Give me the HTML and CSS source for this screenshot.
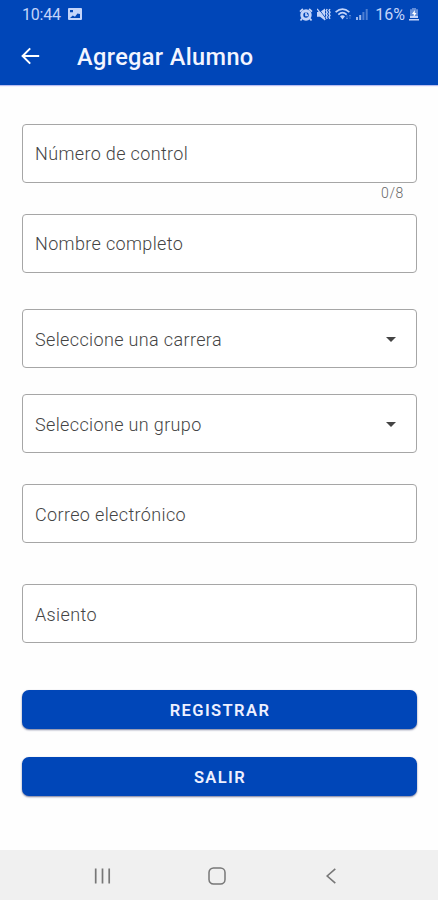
FILE: index.html
```html
<!DOCTYPE html>
<html lang="es">
<head>
<meta charset="utf-8">
<meta name="viewport" content="width=device-width, initial-scale=1">
<title>Agregar Alumno</title>
<link rel="stylesheet" href="styles.css">
</head>
<body>
<header class="header">
  <div class="status">
    <span class="time">10:44</span>
    <svg class="picture" width="14" height="13" viewBox="0 0 14 13"><path fill="currentColor" fill-rule="evenodd" d="M1 0h12a1 1 0 0 1 1 1v10a1 1 0 0 1-1 1H1a1 1 0 0 1-1-1V1a1 1 0 0 1 1-1ZM2 10h10V6L9.4 5.5 7 8.7 4.8 7.5ZM2 2v2.2h3V2Z"/></svg>
    <div class="indicators">
      <svg width="14" height="13" viewBox="0 0 14 13"><circle cx="7" cy="7" r="4.2" fill="none" stroke="currentColor" stroke-width="3"/><path d="M1 3.6 3.9 1M13 3.6 10.1 1M3 10.5l-1.5 2M11 10.5l1.5 2M7 4.5V7.3h2" fill="none" stroke="currentColor" stroke-width="1.7"/></svg>
      <svg width="14" height="13" viewBox="0 0 14 13"><path d="M0 4h3l5-3.4v12L3 8.8H0Z" fill="currentColor"/><path d="m1.2.2 7.5 10" stroke="#0046b8" stroke-width=".9"/><path d="m.2.8 8 11" stroke="currentColor" stroke-width="1.3"/><path d="m10.2 1-1 1.6 1 1.6-1 1.6 1 1.6-1 1.6 1 1.8M13 1l-1 1.6 1 1.6-1 1.6 1 1.6-1 1.6 1 1.8" fill="none" stroke="currentColor" stroke-width="1.4"/></svg>
      <svg width="17" height="13" viewBox="0 0 17 13"><path d="M.6 4.2Q7.5-1.8 14.4 4.2M3.3 6.6q4.2-3.8 8.4 0" fill="none" stroke="currentColor" stroke-width="1.7"/><path d="M5 8.2q2.5-2 5 0L7.5 11.4Z" fill="currentColor"/><path d="M12 7v4m-1.2-1.2L12 11l1.2-1.2M15 11V7m-1.2 1.2L15 7l1.2 1.2" fill="none" stroke="currentColor" stroke-width=".8" opacity=".4"/></svg>
      <svg width="13" height="13" viewBox="0 0 13 13" fill="currentColor"><path d="M0 9h2v3H0ZM3.2 7h2v5h-2Z" opacity=".8"/><path d="M6.4 4h2v8h-2ZM9.7 1h2v11h-2Z" opacity=".4"/></svg>
      <span class="percent">16%</span>
      <svg class="battery" width="10" height="13" viewBox="0 0 10 13"><path d="M3 0h4v1.2h2V8H1V1.2h2Z" fill="currentColor" opacity=".5"/><path d="M1 8h8v2H1ZM0 11h10v1.6H0Z" fill="currentColor"/><path d="M5.8 2 3 6h1.7v3L7.5 5H5.8Z" fill="#fff"/></svg>
    </div>
  </div>
  <div class="toolbar">
    <svg class="back" width="20" height="20" viewBox="0 0 20 20"><path d="M19.2 9H3M10.2 1.4 2.6 9l7.6 7.6" fill="none" stroke="#fff" stroke-width="2"/></svg>
    <h1>Agregar Alumno</h1>
  </div>
</header>
<main class="form">
  <div class="field"><span class="label">Número de control</span></div>
  <div class="counter">0/8</div>
  <div class="field"><span class="label">Nombre completo</span></div>
  <div class="field carrera"><span class="label">Seleccione una carrera</span><svg width="10" height="5" viewBox="0 0 10 5"><path d="M0 0h10L5 5Z" fill="#444"/></svg></div>
  <div class="field grupo"><span class="label">Seleccione un grupo</span><svg width="10" height="5" viewBox="0 0 10 5"><path d="M0 0h10L5 5Z" fill="#444"/></svg></div>
  <div class="field correo"><span class="label">Correo electrónico</span></div>
  <div class="field asiento"><span class="label">Asiento</span></div>
  <button class="button registrar" type="button">REGISTRAR</button>
  <button class="button salir" type="button">SALIR</button>
</main>
<nav class="nav">
  <svg width="18" height="18" viewBox="0 0 18 18"><path d="M1.7 1.5v15M8.5 1.5v15M15.2 1.5v15" stroke="#777" stroke-width="1.7"/></svg>
  <svg width="18" height="18" viewBox="0 0 18 18"><rect x="1" y="1" width="16" height="16" rx="4.5" fill="none" stroke="#777" stroke-width="1.5"/></svg>
  <svg width="18" height="18" viewBox="0 0 18 18"><path d="M13.3 1.8 5.2 9l8.1 7.2" fill="none" stroke="#777" stroke-width="1.6"/></svg>
</nav>
</body>
</html>
```
FILE: styles.css
```css
* { box-sizing: border-box; }

body {
  margin: 0;
  height: 900px;
  display: flex;
  flex-direction: column;
  background: #fefefe;
  font-family: Roboto, sans-serif;
  overflow: hidden;
}

svg { display: block; flex: none; }

.header {
  height: 85px;
  flex: none;
  background: #0046b8;
  box-shadow: 0 1px 1px #b9bdf0;
}

.status {
  height: 28px;
  display: flex;
  align-items: center;
  padding: 1px 19px 0 22px;
  color: #c3d4fa;
}

.time { font-size: 16px; line-height: 28px; letter-spacing: -0.2px; }
.picture { margin-left: 7px; }
.indicators { display: flex; align-items: center; gap: 4px; margin-left: auto; }
.percent { font-size: 16px; line-height: 28px; margin-left: 2px; }

.toolbar { height: 57px; display: flex; align-items: center; padding-left: 20px; }
.toolbar h1 {
  margin: 0 0 0 37px;
  color: #f3f5ff;
  font-size: 23.5px;
  font-weight: 500;
  line-height: 28px;
  letter-spacing: 0.38px;
}

.form { flex: 1; padding: 39px 21px 0 22px; }

.field {
  height: 59px;
  display: flex;
  align-items: center;
  justify-content: space-between;
  padding: 0 20px 0 12px;
  border: 1px solid #a6a6a6;
  border-radius: 4px;
  background: #fff;
}

.label { color: #444; font-size: 18px; font-weight: 300; line-height: 24px; letter-spacing: 0.36px; }

.counter {
  height: 31px;
  padding: 2px 13px 0 0;
  color: #666;
  font-size: 14px;
  font-weight: 300;
  line-height: 17px;
  letter-spacing: 0.6px;
  text-align: right;
}

.carrera { margin-top: 36px; }
.grupo { margin-top: 26px; }
.correo { margin-top: 31px; }
.asiento { margin-top: 41px; }
.carrera, .grupo, .correo, .asiento { padding-top: 2px; }

.button {
  display: block;
  width: 100%;
  height: 39px;
  padding: 2px 0 0 1px;
  border: 0;
  border-radius: 7px;
  background: #0046b8;
  box-shadow: 0 1px 2px #777a9a;
  color: #eef0ff;
  font: 600 16.5px/37px Roboto, sans-serif;
  letter-spacing: 1.4px;
}

.registrar { margin-top: 47px; }
.salir { margin-top: 28px; }

.nav {
  height: 50px;
  flex: none;
  display: flex;
  align-items: center;
  justify-content: center;
  gap: 96px;
  padding: 1px 4px 0 0;
  background: #f0f0f0;
}
```
